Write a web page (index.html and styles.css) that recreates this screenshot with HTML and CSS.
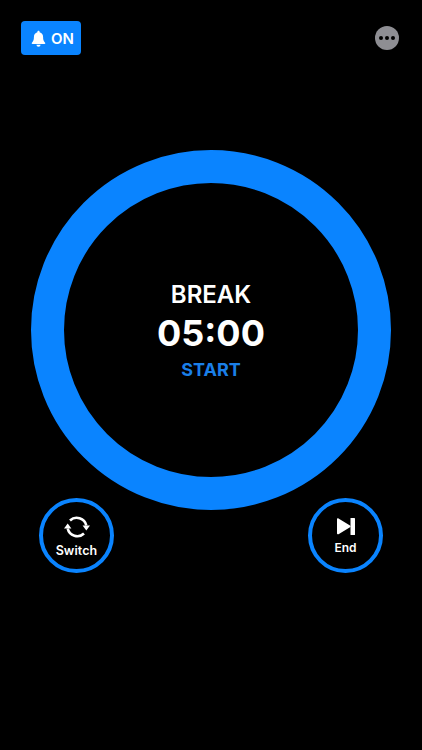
FILE: index.html
```html
<!DOCTYPE html>
<html lang="en">
<head>
<meta charset="utf-8">
<title>Break timer</title>
<link rel="stylesheet" href="styles.css">
</head>
<body>
<main class="screen">
  <header class="top">
    <div class="alarm">
      <svg class="bell" viewBox="0 0 16 18" aria-hidden="true"><path d="M8 0.6c-.7 0-1.2.5-1.2 1.2v.5C4.400 2.900 3.100 4.900 3.100 7.400c0 2.900-.5 4.200-1.500 5.200-.5.5-.9.9-.9 1.400 0 .5.4.8 1 .8h12.600c.6 0 1-.3 1-.8 0-.5-.4-.9-.9-1.400-1-1-1.500-2.300-1.500-5.200 0-2.500-1.300-4.500-3.700-5.100v-.5C9.200 1.100 8.700.6 8 .6z"/><path d="M5.800 15.700a2.200 2 0 0 0 4.400 0z"/></svg>
      <span>ON</span>
    </div>
    <div class="more"><i></i><i></i><i></i></div>
  </header>
  <section class="ring">
    <div class="mode">BREAK</div>
    <div class="time">05:00</div>
    <div class="start">START</div>
  </section>
  <section class="actions">
    <div class="action">
      <svg class="icon-switch" viewBox="0 0 26 24" aria-hidden="true">
        <path class="stroke" d="M6 5.500A9.800 9.800 0 0 1 22.300 10.500"/>
        <path class="stroke" d="M20 18.500A9.800 9.800 0 0 1 3.700 13.500"/>
        <path d="M18.600 10.500h7.400l-3.700 5z"/>
        <path d="M7.400 13.500H0l3.700-5z"/>
      </svg>
      <span>Switch</span>
    </div>
    <div class="action">
      <svg class="icon-end" viewBox="0 0 20 17" aria-hidden="true">
        <path d="M1 1.300c0-.9.800-1.300 1.500-.9l11.500 7c.7.4.7 1.400 0 1.800l-11.500 7C1.800 16.600 1 16.200 1 15.300z"/>
        <rect x="14.500" y="0" width="4.500" height="17" rx=".6"/>
      </svg>
      <span>End</span>
    </div>
  </section>
</main>
</body>
</html>
```
FILE: styles.css
```css
* { box-sizing: border-box; }
html, body { margin: 0; height: 100%; background: #000; }
body { font-family: Inter, "Liberation Sans", sans-serif; color: #fff; }
.screen { width: 422px; height: 750px; overflow: hidden; padding-top: 21px; display: flex; flex-direction: column; }
.top { display: flex; justify-content: space-between; align-items: center; padding: 0 23px 0 21px; }
.alarm { width: 60px; height: 34px; border-radius: 4px; background: #0a84ff; display: flex; align-items: center; gap: 5px; padding-left: 10px; font-size: 15px; font-weight: 600; }
.bell { width: 15px; height: 17px; fill: #fff; }
.more { width: 24px; height: 24px; border-radius: 50%; background: #8e8e93; display: flex; align-items: center; justify-content: center; gap: 2px; }
.more i { width: 4px; height: 4px; border-radius: 50%; background: #000; }
.ring { width: 360px; height: 360px; margin: 95px 0 0 31px; border: 33px solid #0a84ff; border-radius: 50%; display: flex; flex-direction: column; align-items: center; justify-content: center; }
.mode { font-size: 24px; line-height: 28px; font-weight: 600; margin-top: 2px; }
.time { font-size: 36px; line-height: 45px; font-weight: 700; margin-top: 2px; }
.start { font-size: 18px; line-height: 22px; font-weight: 700; color: #1a7fe8; margin-top: 3px; }
.actions { display: flex; justify-content: space-between; padding: 0 39px; margin-top: -12px; }
.action { width: 75px; height: 75px; border: 4px solid #0a84ff; border-radius: 50%; display: flex; flex-direction: column; align-items: center; justify-content: center; font-size: 12px; line-height: 15px; font-weight: 600; gap: 5px; }
.action:first-child { font-size: 12.500px; letter-spacing: .1px; gap: 4px; padding-top: 2px; }
.action:last-child { padding-top: 2px; }
.icon-switch { width: 26px; height: 24px; fill: #fff; overflow: visible; }
.icon-switch .stroke { fill: none; stroke: #fff; stroke-width: 2.600; }
.icon-end { width: 20px; height: 17px; fill: #fff; }
```
